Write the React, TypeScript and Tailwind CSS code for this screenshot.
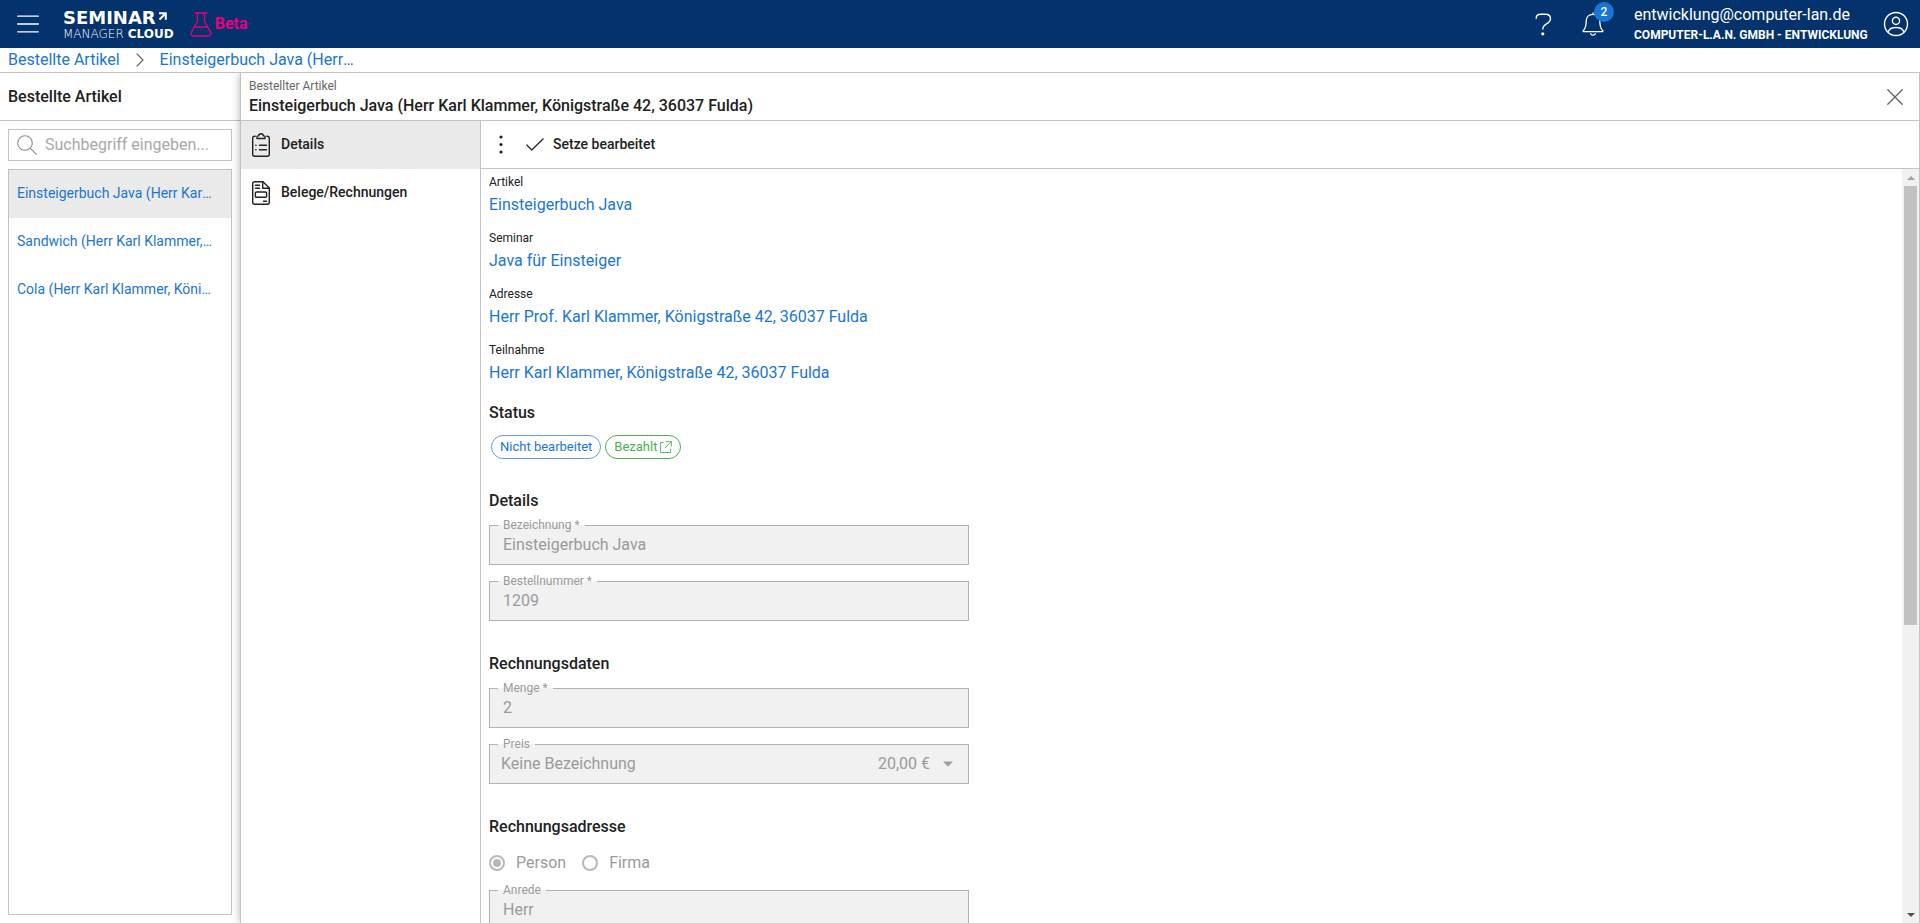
import React from "react";

const text = "text-[#212121]";
const link = "text-[#1976d2]";

function MenuIcon() {
  return (
    <svg width="22" height="18" viewBox="0 0 22 18" fill="none" stroke="#fff" strokeWidth="1.3" strokeLinecap="round">
      <path d="M.7 1.2h20.6M.7 9h20.6M.7 16.8h20.6" />
    </svg>
  );
}

function FlaskIcon() {
  return (
    <svg width="22" height="25" viewBox="0 0 22 25" fill="none" stroke="#e6007e" strokeWidth="1.3" strokeLinecap="round" strokeLinejoin="round">
      <path d="M5 1h12M7.5 1.3v8.2L1.6 19.6c-1.4 2.4 0 4.4 2.200 4.400h14.400c2.200 0 3.600-2 2.200-4.400L14.500 9.500V1.300M4.500 15h13" />
    </svg>
  );
}

function HelpIcon() {
  return (
    <svg width="17" height="23" viewBox="0 0 17 23" fill="none" stroke="#fff" strokeWidth="1.4" strokeLinecap="round" strokeLinejoin="round">
      <path d="M1.2 5.200C1.200 2.500 3 1.200 5.500 1.200h5c3 0 5 1.700 5 4.500 0 2.600-1.600 3.700-4 5.100-2.400 1.400-3.700 2.400-3.700 5.200" />
      <circle cx="7.800" cy="20.800" r=".9" fill="#fff" />
    </svg>
  );
}

function BellIcon() {
  return (
    <svg width="22" height="24" viewBox="0 0 22 24" fill="none" stroke="#fff" strokeWidth="1.300" strokeLinecap="round" strokeLinejoin="round">
      <path d="M11 .8v1.600M11 2.400c-4 0-6.800 2.800-6.800 6.800 0 5.500-1.200 7.600-3 9.600v.8h19.600v-.8c-1.800-2-3-4.100-3-9.600 0-4-2.800-6.800-6.800-6.800zM8.600 21.800c.4.900 1.300 1.400 2.400 1.400s2-.5 2.400-1.400" />
    </svg>
  );
}

function UserIcon() {
  return (
    <svg width="26" height="26" viewBox="0 0 26 26" fill="none" stroke="#fff" strokeWidth="1.400" strokeLinecap="round">
      <circle cx="13" cy="13" r="11.500" />
      <circle cx="13" cy="9.800" r="3.600" />
      <path d="M5.200 21.200c.8-3.500 3.300-4.700 7.800-4.700s7 1.200 7.800 4.700" />
    </svg>
  );
}

function ChevronIcon() {
  return (
    <svg width="8" height="14" viewBox="0 0 8 14" fill="none" stroke="#616161" strokeWidth="1.200" strokeLinecap="round" strokeLinejoin="round">
      <path d="M1 .8 7 7l-6 6.200" />
    </svg>
  );
}

function SearchIcon() {
  return (
    <svg className="shrink-0" width="20" height="20" viewBox="0 0 20 20" fill="none" stroke="#8c8c8c" strokeWidth="1.100" strokeLinecap="round">
      <circle cx="8" cy="8" r="7.300" />
      <path d="m13.400 13.400 6 6" />
    </svg>
  );
}

function ClipboardIcon() {
  return (
    <svg width="18" height="24" viewBox="0 0 18 24" fill="none" stroke="#212121" strokeWidth="1.400" strokeLinecap="round" strokeLinejoin="round">
      <path d="M3.200 3.200H2.700c-1.200 0-2 .8-2 2v16c0 1.200.8 2 2 2h12.600c1.200 0 2-.8 2-2v-16c0-1.200-.8-2-2-2h-.5" />
      <path d="M5 5.500h8V3.800c0-.6-.4-.9-1-.9h-.6C11.300 1.500 10.400.700 9 .700s-2.300.800-2.400 2.200H6c-.6 0-1 .3-1 .9z" />
      <path d="M7.500 12.200h7M7.500 16.700h7" />
      <path d="M3.800 12.200h.2M3.800 16.700h.2" />
    </svg>
  );
}

function InvoiceIcon() {
  return (
    <svg width="18" height="24" viewBox="0 0 18 24" fill="none" stroke="#212121" strokeWidth="1.400" strokeLinecap="round" strokeLinejoin="round">
      <path d="M11 .700H2.700c-1.200 0-2 .8-2 2v18.600c0 1.200.8 2 2 2h12.600c1.200 0 2-.8 2-2V7z" />
      <path d="M10.700.900v6.300h6.400M3.500 4.200h4M3.500 7.200h4M11.500 20.200h3" />
      <rect x="3.400" y="11" width="11.200" height="5.200" rx="1" />
    </svg>
  );
}

function CheckIcon() {
  return (
    <svg width="18" height="13" viewBox="0 0 18 13" fill="none" stroke="#212121" strokeWidth="1.200" strokeLinecap="round" strokeLinejoin="round">
      <path d="m.8 7 5 5L17.200.8" />
    </svg>
  );
}

function CloseIcon() {
  return (
    <svg width="16" height="16" viewBox="0 0 16 16" fill="none" stroke="#616161" strokeWidth="1.300" strokeLinecap="round">
      <path d="m.8.8 14.400 14.400M15.200.8.8 15.200" />
    </svg>
  );
}

function ExternalIcon() {
  return (
    <svg width="12" height="12" viewBox="0 0 12 12" fill="none" stroke="#4caf50" strokeWidth=".9">
      <path d="M3.600 1.500H.6v10h10V7.600M5.800.600h5.600v5.200M11.400.600 5 7" />
    </svg>
  );
}

function Logo() {
  return (
    <div className="flex flex-col pt-1 font-['DejaVu_Sans',sans-serif] text-white">
      <div className="flex items-center gap-0.5">
        <span className="text-[18px] leading-4 font-bold">SEMINAR</span>
        <svg className="mb-1" width="9" height="9" viewBox="0 0 9 9" fill="none" stroke="#fff" strokeWidth="2">
          <path d="M1 1.200h6.800v6.600M7.300 1.700 1.500 7.500" />
        </svg>
      </div>
      <div className="flex gap-1 text-[12px] leading-4">
        <span className="font-extralight">MANAGER</span>
        <span className="font-bold">CLOUD</span>
      </div>
    </div>
  );
}

function Header() {
  return (
    <header className="flex h-12 shrink-0 items-center bg-[#03326c] pr-[11px] pl-[17px] text-white">
      <button type="button" aria-label="Menü">
        <MenuIcon />
      </button>
      <div className="ml-6">
        <Logo />
      </div>
      <div className="ml-4 flex items-center gap-[3px]">
        <FlaskIcon />
        <span className="text-base font-bold text-[#e6007e]">Beta</span>
      </div>
      <div className="ml-auto flex items-center">
        <button type="button" aria-label="Hilfe">
          <HelpIcon />
        </button>
        <button type="button" aria-label="Benachrichtigungen" className="relative ml-[30px]">
          <BellIcon />
          <span className="absolute -top-[10px] left-3 flex size-5 items-center justify-center rounded-full bg-[#1976d2] text-xs font-medium">2</span>
        </button>
        <div className="ml-[30px] flex min-w-[239px] flex-col pt-0.5">
          <span className="text-base leading-5">entwicklung@computer-lan.de</span>
          <span className="text-xs leading-5 font-bold">COMPUTER-L.A.N. GMBH - ENTWICKLUNG</span>
        </div>
        <button type="button" aria-label="Konto" className="ml-[10px]">
          <UserIcon />
        </button>
      </div>
    </header>
  );
}

const orders = [
  "Einsteigerbuch Java (Herr Karl Klammer, Königstraße 42, 36037 Fulda)",
  "Sandwich (Herr Karl Klammer, Königstraße 42, 36037 Fulda)",
  "Cola (Herr Karl Klammer, Königstraße 42, 36037 Fulda)",
];

function Sidebar() {
  return (
    <aside className="flex w-60 shrink-0 flex-col">
      <h2 className="flex h-12 shrink-0 items-center border-b border-[#c2c2c2] px-2 text-base font-medium">Bestellte Artikel</h2>
      <div className="flex min-h-0 flex-1 flex-col gap-2 p-2">
        <label className="flex h-8 shrink-0 items-center gap-2 border border-[#c2c2c2] px-2">
          <SearchIcon />
          <input
            type="search"
            aria-label="Suche"
            placeholder="Suchbegriff eingeben..."
            className="w-full min-w-0 bg-transparent text-base outline-none placeholder:text-[#a8a8a8]"
          />
        </label>
        <ul className="min-h-0 flex-1 border border-[#c2c2c2]">
          {orders.map((order, i) => (
            <li key={order} className={i === 0 ? "bg-[#eaeaea]" : ""}>
              <a href="#" className={`block truncate pr-[18px] pb-0.5 pl-2 text-sm leading-[46px] ${link}`}>
                {order}
              </a>
            </li>
          ))}
        </ul>
      </div>
    </aside>
  );
}

function Reference({ label, value }: { label: string; value: string }) {
  return (
    <div>
      <dt className="text-xs leading-[18px]">{label}</dt>
      <dd className="pt-0.5 text-base leading-6">
        <a href="#" className={link}>
          {value}
        </a>
      </dd>
    </div>
  );
}

function Outline({ id, label, children }: { id: string; label: string; children: React.ReactNode }) {
  return (
    <fieldset className="w-full border border-[#b0b0b0] bg-[#f1f1f1] px-2 pb-[7px] text-[#9a9a9a]">
      <legend className="px-[5px] text-xs leading-4">
        <label htmlFor={id}>{label}</label>
      </legend>
      {children}
    </fieldset>
  );
}

function Field({ id, label, value }: { id: string; label: string; value: string }) {
  return (
    <Outline id={id} label={label}>
      <input id={id} type="text" value={value} disabled className="block h-6 w-full bg-transparent px-[5px] text-base" />
    </Outline>
  );
}

function PriceField() {
  return (
    <Outline id="preis" label="Preis">
      <div className="flex h-6 items-center pr-1 pl-[3px] text-base">
        <select id="preis" disabled className="min-w-0 flex-1 appearance-none bg-transparent opacity-100">
          <option>Keine Bezeichnung</option>
        </select>
        <span>20,00 €</span>
        <svg className="mr-0.5 ml-3" width="12" height="6" viewBox="0 0 12 6" fill="#9e9e9e">
          <path d="M1 .500h10L6 5.500z" />
        </svg>
      </div>
    </Outline>
  );
}

function Radio({ label, checked }: { label: string; checked: boolean }) {
  return (
    <label className="flex items-center gap-[11px] text-base leading-6 text-[#9a9a9a]">
      <input
        type="radio"
        name="empfaenger"
        defaultChecked={checked}
        disabled
        className="size-4 appearance-none rounded-full border-2 border-[#b8b8b8] bg-white bg-clip-content p-0.5 checked:bg-[#b8b8b8]"
      />
      {label}
    </label>
  );
}

function Section({ title, children }: { title: string; children: React.ReactNode }) {
  return (
    <section className="flex max-w-[480px] flex-col">
      <h3 className="text-base leading-6 font-medium">{title}</h3>
      {children}
    </section>
  );
}

function Content() {
  return (
    <div className="flex min-w-0 flex-1 flex-col overflow-hidden pt-1 pl-2">
      <dl className="flex flex-col gap-3">
        <Reference label="Artikel" value="Einsteigerbuch Java" />
        <Reference label="Seminar" value="Java für Einsteiger" />
        <Reference label="Adresse" value="Herr Prof. Karl Klammer, Königstraße 42, 36037 Fulda" />
        <Reference label="Teilnahme" value="Herr Karl Klammer, Königstraße 42, 36037 Fulda" />
      </dl>
      <div className="mt-4 flex flex-col gap-[31px]">
        <Section title="Status">
          <div className="-mb-px flex gap-1 px-0.5 pt-2.5">
            <span className="flex h-6 items-center rounded-full border border-[#5c9fe6] px-2 text-[13px] text-[#1976d2]">Nicht bearbeitet</span>
            <button type="button" className="flex h-6 items-center gap-[3px] rounded-full border border-[#4caf50] px-2 text-[13px] text-[#4caf50]">
              Bezahlt
              <ExternalIcon />
            </button>
          </div>
        </Section>
        <Section title="Details">
          <div className="mt-1 flex flex-col gap-2">
            <Field id="bezeichnung" label="Bezeichnung *" value="Einsteigerbuch Java" />
            <Field id="bestellnummer" label="Bestellnummer *" value="1209" />
          </div>
        </Section>
        <Section title="Rechnungsdaten">
          <div className="mt-1 flex flex-col gap-2">
            <Field id="menge" label="Menge *" value="2" />
            <PriceField />
          </div>
        </Section>
        <Section title="Rechnungsadresse">
          <div className="mt-3 flex flex-col gap-[7px]">
            <div className="flex gap-4">
              <Radio label="Person" checked />
              <Radio label="Firma" checked={false} />
            </div>
            <Field id="anrede" label="Anrede" value="Herr" />
          </div>
        </Section>
      </div>
    </div>
  );
}

function ScrollBar() {
  return (
    <div aria-hidden="true" className="flex w-[17px] shrink-0 flex-col items-center bg-[#f1f1f1]">
      <div className="flex h-[17px] shrink-0 items-center justify-center">
        <svg width="8" height="4" viewBox="0 0 8 4" fill="#a3a3a3">
          <path d="M4 0 8 4H0z" />
        </svg>
      </div>
      <div className="min-h-0 w-full flex-1 px-0.5">
        <div className="h-[61%] bg-[#c1c1c1]" />
      </div>
      <div className="flex h-[17px] shrink-0 items-center justify-center">
        <svg width="8" height="4" viewBox="0 0 8 4" fill="#505050">
          <path d="M0 0h8L4 4z" />
        </svg>
      </div>
    </div>
  );
}

function Detail() {
  return (
    <main className="z-10 flex min-w-0 flex-1 flex-col border-x border-[#c2c2c2] bg-white shadow-[0_0_8px_rgba(0,0,0,0.3)]">
      <div className="flex h-12 shrink-0 items-center justify-between border-b border-[#c2c2c2] pr-4 pl-2">
        <div className="pb-0.5">
          <p className="text-xs leading-5 text-[#666]">Bestellter Artikel</p>
          <h1 className="text-base leading-5 font-medium">Einsteigerbuch Java (Herr Karl Klammer, Königstraße 42, 36037 Fulda)</h1>
        </div>
        <button type="button" aria-label="Schließen">
          <CloseIcon />
        </button>
      </div>
      <div className="flex min-h-0 flex-1">
        <nav className="w-60 shrink-0 border-r border-[#c2c2c2] text-sm font-medium">
          <a href="#" className="flex h-12 items-center gap-[11px] bg-[#eaeaea] pl-[11px]">
            <ClipboardIcon />
            <span className="pb-0.5">Details</span>
          </a>
          <a href="#" className="flex h-12 items-center gap-[11px] pl-[11px]">
            <InvoiceIcon />
            <span className="pb-0.5">Belege/Rechnungen</span>
          </a>
        </nav>
        <div className="flex min-w-0 flex-1 flex-col">
          <div className="flex h-12 shrink-0 items-center border-b border-[#c2c2c2] pl-[18px]">
            <button type="button" aria-label="Mehr">
              <svg width="4" height="19" viewBox="0 0 4 19" fill="#212121">
                <circle cx="2" cy="2" r="1.600" />
                <circle cx="2" cy="9.500" r="1.600" />
                <circle cx="2" cy="17" r="1.600" />
              </svg>
            </button>
            <button type="button" className="ml-[23px] flex items-center gap-[9px] text-sm font-medium">
              <CheckIcon />
              <span className="pb-0.5">Setze bearbeitet</span>
            </button>
          </div>
          <div className="flex min-h-0 flex-1">
            <Content />
            <ScrollBar />
          </div>
        </div>
      </div>
    </main>
  );
}

export default function App() {
  return (
    <div className={`flex h-screen flex-col overflow-hidden bg-white font-[Roboto,sans-serif] ${text}`}>
      <Header />
      <nav aria-label="Pfad" className={`flex h-[25px] shrink-0 items-center gap-4 border-b border-[#c2c2c2] px-2 text-base leading-6 ${link}`}>
        <a href="#">Bestellte Artikel</a>
        <ChevronIcon />
        <a href="#" className="max-w-[196px] truncate">
          Einsteigerbuch Java (Herr Karl Klammer, Königstraße 42, 36037 Fulda)
        </a>
      </nav>
      <div className="flex min-h-0 flex-1 overflow-hidden">
        <Sidebar />
        <Detail />
      </div>
    </div>
  );
}
